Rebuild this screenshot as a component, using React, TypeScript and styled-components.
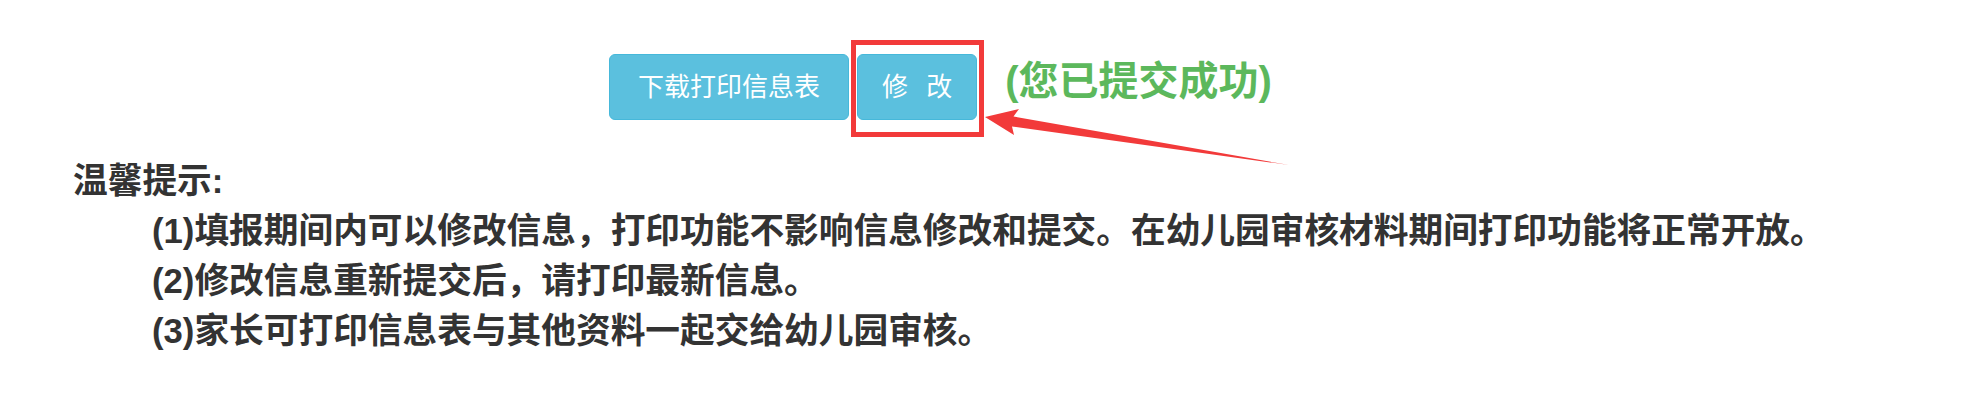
import React from 'react';
import styled, { createGlobalStyle } from 'styled-components';

const GlobalStyle = createGlobalStyle`
  html, body {
    margin: 0;
    padding: 0;
    background: #fff;
  }
  body {
    font-family: "Liberation Sans", "Noto Sans CJK SC", sans-serif;
    color: #333;
  }
`;

const Page = styled.div`
  position: relative;
  width: 1977px;
  height: 404px;
  overflow: hidden;
  background: #fff;
`;

const ActionRow = styled.div`
  display: flex;
  align-items: center;
  padding: 54px 0 0 609px;
`;

const ButtonGroup = styled.div`
  position: relative;
  display: flex;
  gap: 8px;
`;

const InfoButton = styled.button<{ $wide?: boolean }>`
  height: 66px;
  padding: 0 ${(p) => (p.$wide ? '28px' : '24px')};
  border: 1px solid #46b8da;
  border-radius: 6px;
  background: #5bc0de;
  color: #fff;
  font-family: "Liberation Sans", "Noto Sans CJK SC", sans-serif;
  font-size: 26px;
  line-height: 64px;
  word-spacing: 11px;
  cursor: pointer;
`;

const Highlight = styled.span`
  position: absolute;
  left: 242px;
  top: -14px;
  width: 123px;
  height: 87px;
  border: 5px solid #f23a3a;
  pointer-events: none;
`;

const Success = styled.span`
  margin: 0 0 12px 28px;
  color: #5cb85c;
  font-size: 40px;
  font-weight: bold;
  line-height: 50px;
`;

const Tips = styled.div`
  padding: 36px 0 0 73px;
  font-size: 34.7px;
  font-weight: bold;
  line-height: 50px;
  color: #333;
`;

const TipTitle = styled.div``;

const TipList = styled.ol`
  list-style: none;
  margin: 0;
  padding: 0 0 0 79px;
`;

const TipItem = styled.li``;

const Arrow = styled.svg`
  position: absolute;
  left: 0;
  top: 0;
  pointer-events: none;
`;

const tips = [
  '(1)填报期间内可以修改信息，打印功能不影响信息修改和提交。在幼儿园审核材料期间打印功能将正常开放。',
  '(2)修改信息重新提交后，请打印最新信息。',
  '(3)家长可打印信息表与其他资料一起交给幼儿园审核。',
];

export default function App() {
  return (
    <Page>
      <GlobalStyle />
      <ActionRow>
        <ButtonGroup>
          <InfoButton $wide>下载打印信息表</InfoButton>
          <InfoButton>修 改</InfoButton>
          <Highlight />
        </ButtonGroup>
        <Success>(您已提交成功)</Success>
      </ActionRow>
      <Tips>
        <TipTitle>温馨提示:</TipTitle>
        <TipList>
          {tips.map((t) => (
            <TipItem key={t}>{t}</TipItem>
          ))}
        </TipList>
      </Tips>
      <Arrow width="1977" height="404" viewBox="0 0 1977 404">
        <polygon
          points="985,117 1019,109 1013.5,116.5 1289,165 1012,126.5 1014,135"
          fill="#f23a3a"
        />
      </Arrow>
    </Page>
  );
}
